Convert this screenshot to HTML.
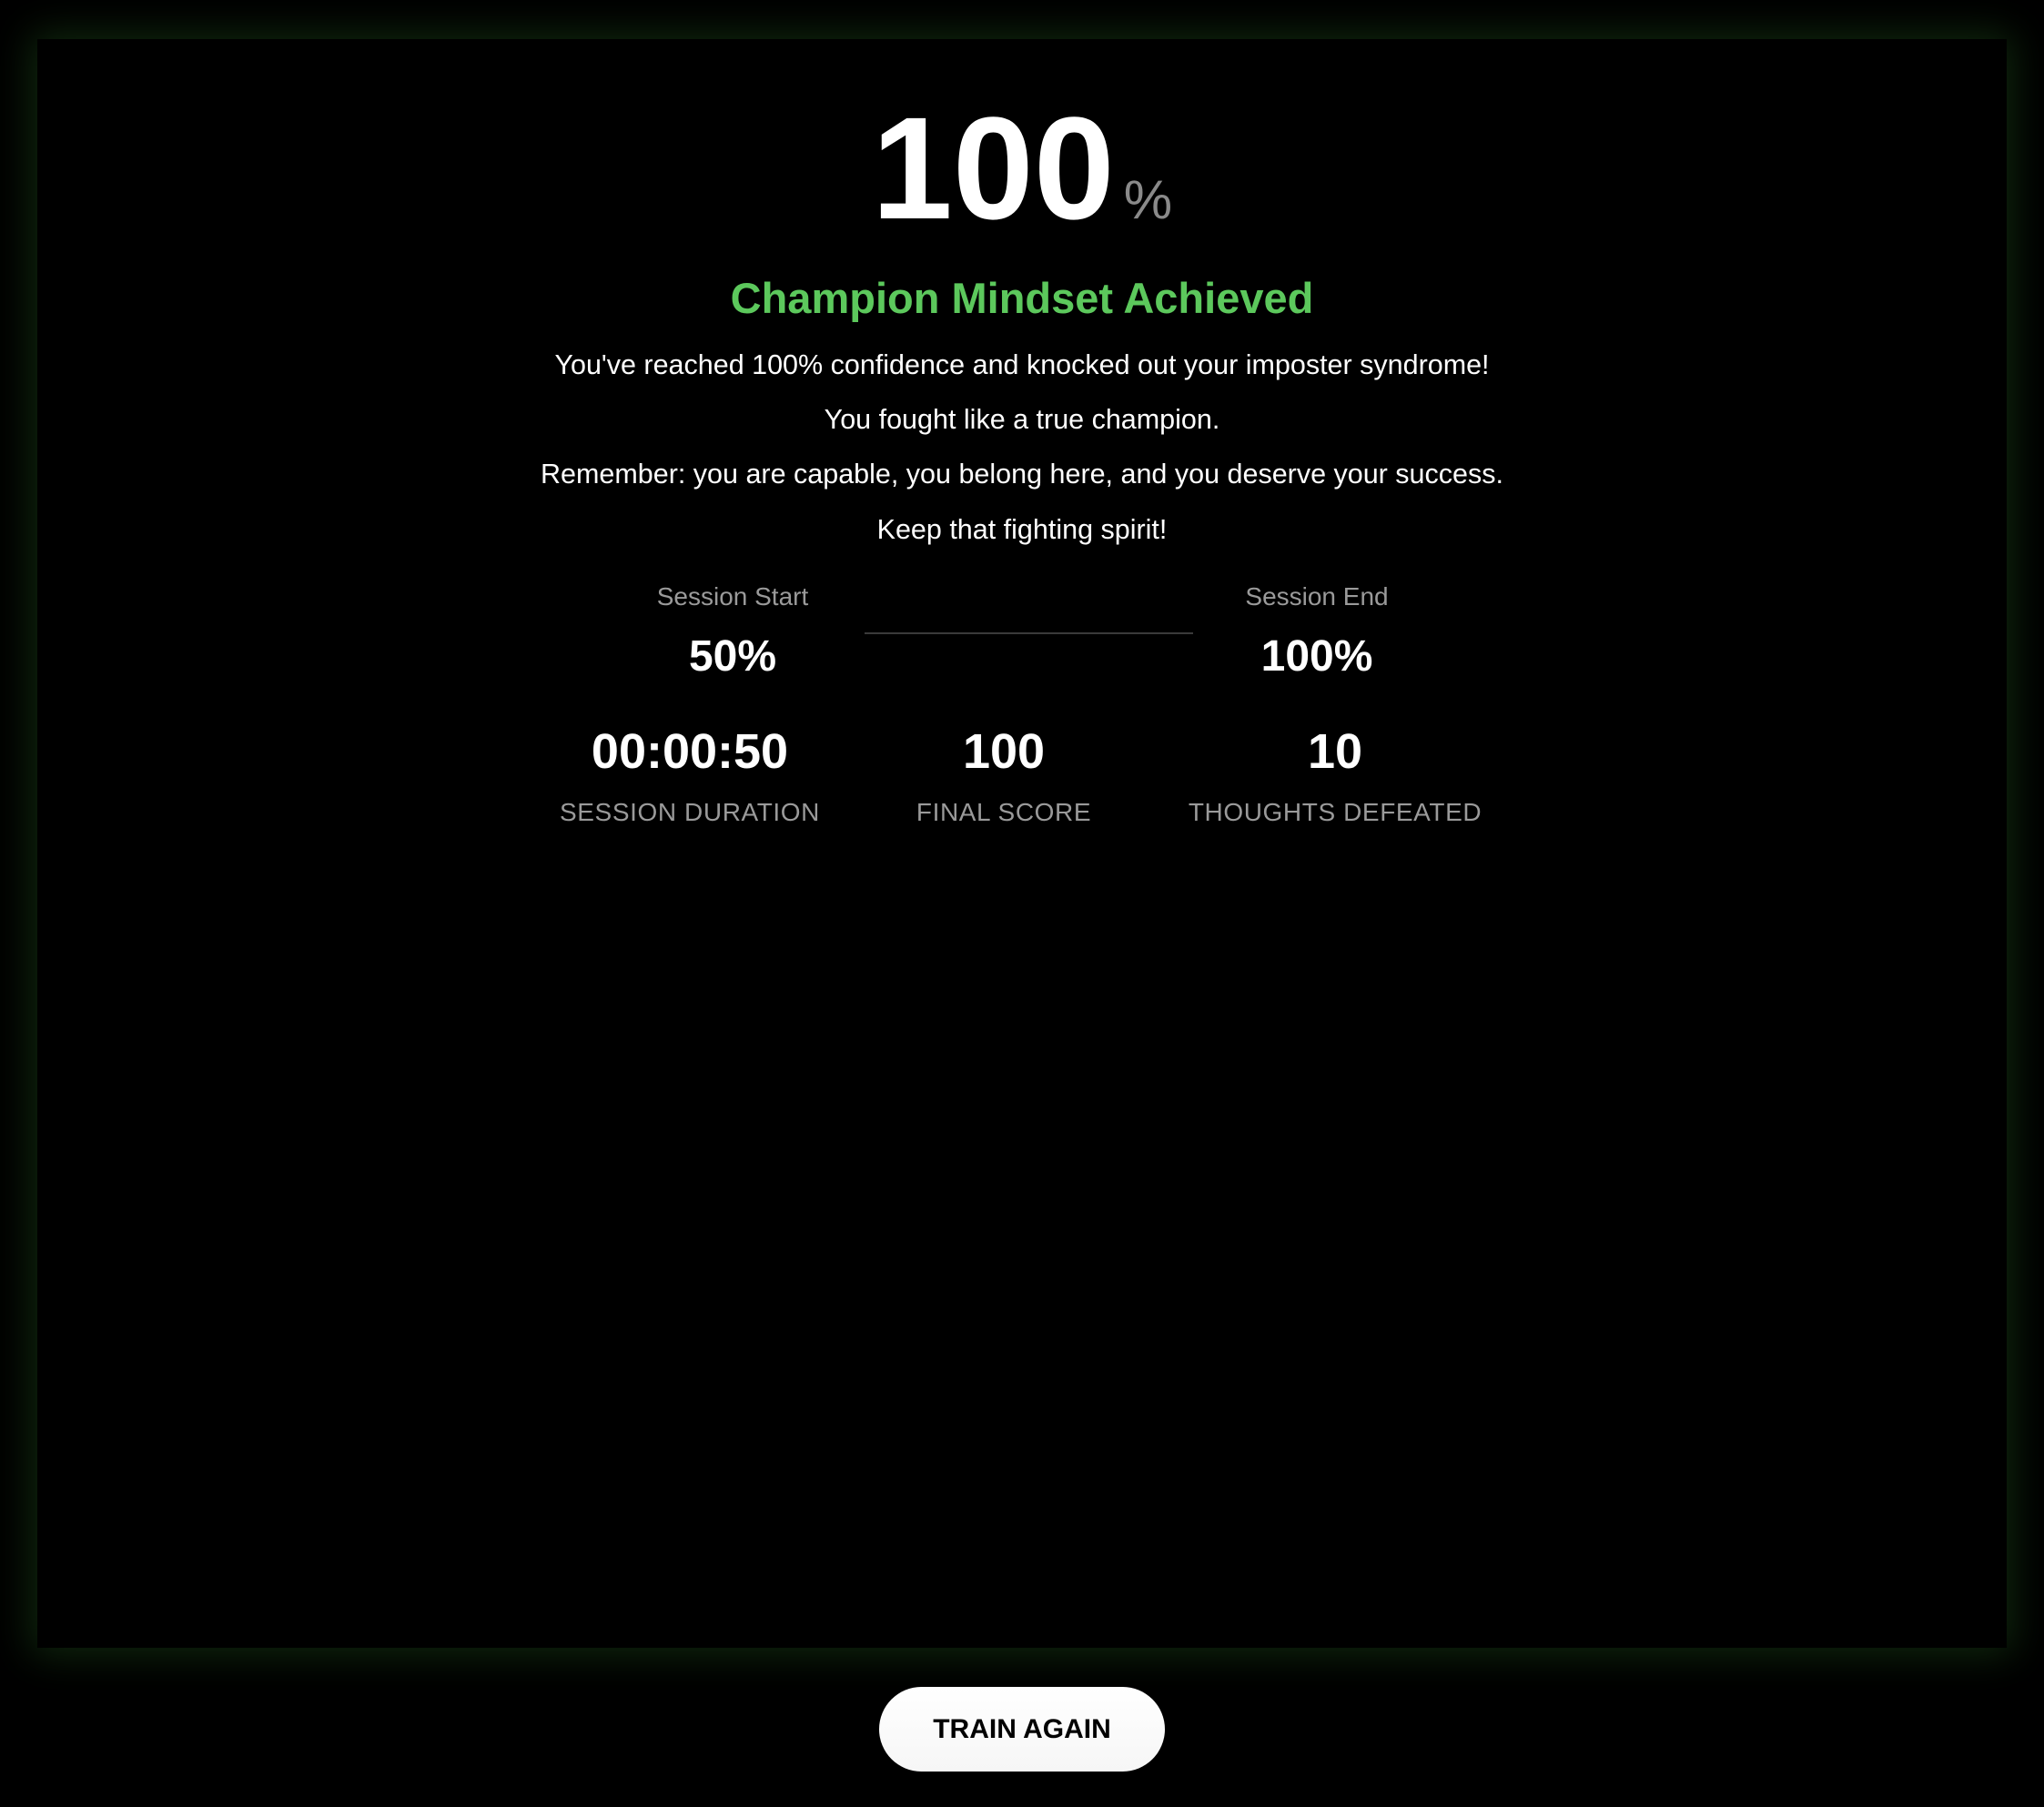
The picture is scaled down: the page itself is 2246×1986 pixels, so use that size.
<!DOCTYPE html>
<html><head><meta charset="utf-8"><style>
html,body{margin:0;padding:0;background:#000;width:2246px;height:1986px;overflow:hidden;font-family:"Liberation Sans",sans-serif;color:#fff}
.panel{position:absolute;left:41px;top:43px;width:2164px;height:1768px;background:#000;box-shadow:0 0 40px 6px rgba(30,75,25,0.55)}
.t{position:absolute;left:0;width:2246px;text-align:center;white-space:nowrap}
.c{position:absolute;text-align:center;white-space:nowrap;transform:translateX(-50%)}
.btn{position:absolute;left:966px;top:1854px;width:314px;height:93px;border-radius:47px;background:linear-gradient(#fff,#f6f6f6);color:#000;font-weight:bold;font-size:30px;line-height:93px;text-align:center}
</style></head><body>
<div class="panel"></div>
<div class="t" style="top:105px;font-size:160px;line-height:160px;font-weight:bold;letter-spacing:0">100<span style="font-size:60px;color:#8a8a8a;font-weight:normal;margin-left:10px">%</span></div>
<div class="t" style="top:304px;font-size:47px;line-height:47px;font-weight:bold;color:#5cc85c">Champion Mindset Achieved</div>
<div class="t" style="top:386px;font-size:30.5px;line-height:30px">You've reached 100% confidence and knocked out your imposter syndrome!</div>
<div class="t" style="top:446px;font-size:30.5px;line-height:30px">You fought like a true champion.</div>
<div class="t" style="top:506px;font-size:30.5px;line-height:30px">Remember: you are capable, you belong here, and you deserve your success.</div>
<div class="t" style="top:567px;font-size:30.5px;line-height:30px">Keep that fighting spirit!</div>
<div class="c" style="left:805px;top:642px;font-size:28px;line-height:28px;color:#9a9a9a">Session Start</div>
<div class="c" style="left:1447px;top:642px;font-size:28px;line-height:28px;color:#9a9a9a">Session End</div>
<div style="position:absolute;left:950px;top:695px;width:361px;height:2px;background:#3a3a3a"></div>
<div class="c" style="left:805px;top:698px;font-size:48px;line-height:48px;font-weight:bold">50%</div>
<div class="c" style="left:1447px;top:698px;font-size:48px;line-height:48px;font-weight:bold">100%</div>
<div class="c" style="left:758px;top:799px;font-size:54px;line-height:54px;font-weight:bold">00:00:50</div>
<div class="c" style="left:1103px;top:799px;font-size:54px;line-height:54px;font-weight:bold">100</div>
<div class="c" style="left:1467px;top:799px;font-size:54px;line-height:54px;font-weight:bold">10</div>
<div class="c" style="left:758px;top:879px;font-size:28px;line-height:28px;color:#9a9a9a;letter-spacing:0.6px">SESSION DURATION</div>
<div class="c" style="left:1103px;top:879px;font-size:28px;line-height:28px;color:#9a9a9a;letter-spacing:0.6px">FINAL SCORE</div>
<div class="c" style="left:1467px;top:879px;font-size:28px;line-height:28px;color:#9a9a9a;letter-spacing:0.6px">THOUGHTS DEFEATED</div>
<div class="btn">TRAIN AGAIN</div>
</body></html>
